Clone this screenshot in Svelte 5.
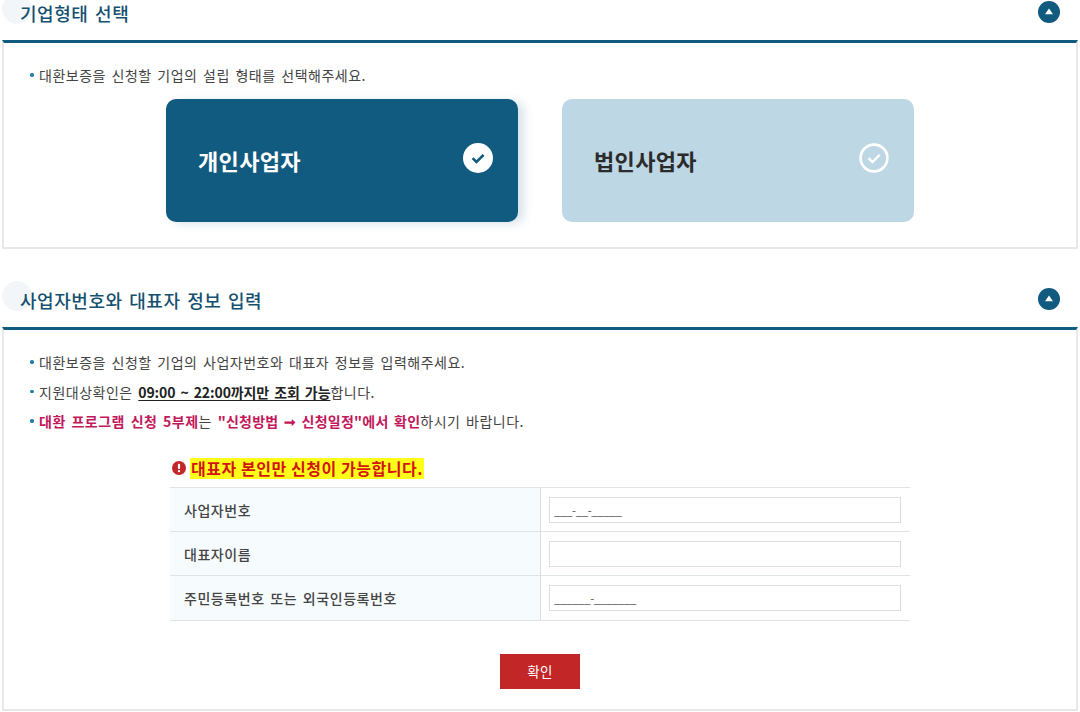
<script>
  let kind = $state('personal');
  const kinds = [
    { id: 'personal', label: '개인사업자' },
    { id: 'corporate', label: '법인사업자' }
  ];
  const rows = [
    { label: '사업자번호', value: '___-__-_____' },
    { label: '대표자이름', value: '' },
    { label: '주민등록번호 또는 외국인등록번호', value: '______-_______' }
  ];
</script>

<main class="page">
  <section class="section">
    <header class="head">
      <h2>기업형태 선택</h2>
      <button class="toggle" aria-label="접기">
        <svg width="22" height="22" viewBox="0 0 22 22"><circle cx="11" cy="11" r="11" fill="#115a80"/><path d="M11 7.4 15 13.2H7Z" fill="#fff"/></svg>
      </button>
    </header>
    <div class="panel first">
      <ul class="notes">
        <li>대환보증을 신청할 기업의 설립 형태를 선택해주세요.</li>
      </ul>
      <div class="cards">
        {#each kinds as k}
          <button class="card" class:on={kind === k.id} onclick={() => (kind = k.id)}>
            <span>{k.label}</span>
            <svg class="tick" width="30" height="30" viewBox="0 0 30 30">
              {#if kind === k.id}
                <circle cx="15" cy="15" r="15" fill="#fff"/>
                <path d="M9.6 15.2 13.4 19 20.6 11.8" fill="none" stroke="#115a80" stroke-width="2.6"/>
              {:else}
                <circle cx="15" cy="15" r="13.4" fill="none" stroke="#fff" stroke-width="2.6"/>
                <path d="M9.6 15.2 13.4 19 20.6 11.8" fill="none" stroke="#fff" stroke-width="2.4"/>
              {/if}
            </svg>
          </button>
        {/each}
      </div>
    </div>
  </section>

  <section class="section second">
    <header class="head">
      <h2>사업자번호와 대표자 정보 입력</h2>
      <button class="toggle" aria-label="접기">
        <svg width="22" height="22" viewBox="0 0 22 22"><circle cx="11" cy="11" r="11" fill="#115a80"/><path d="M11 7.4 15 13.2H7Z" fill="#fff"/></svg>
      </button>
    </header>
    <div class="panel">
      <ul class="notes">
        <li>대환보증을 신청할 기업의 사업자번호와 대표자 정보를 입력해주세요.</li>
        <li>지원대상확인은 <b class="under">09:00 ~ 22:00까지만 조회 가능</b>합니다.</li>
        <li><b class="pink">대환 프로그램 신청 5부제</b>는 <b class="pink tight">"신청방법 ➞ 신청일정"에서 확인</b>하시기 바랍니다.</li>
      </ul>

      <div class="form">
        <p class="warn">
          <svg width="14" height="14" viewBox="0 0 14 14"><circle cx="7" cy="7" r="7" fill="#c32626"/><rect x="5.9" y="2.8" width="2.2" height="5.2" rx="1" fill="#fff"/><circle cx="7" cy="10.1" r="1.2" fill="#fff"/></svg>
          <mark>대표자 본인만 신청이 가능합니다.</mark>
        </p>
        <div class="table">
          {#each rows as r}
            <div class="row">
              <label class="th" for={r.label}>{r.label}</label>
              <div class="td"><input id={r.label} type="text" value={r.value} /></div>
            </div>
          {/each}
        </div>
        <div class="actions"><button class="ok">확인</button></div>
      </div>
    </div>
  </section>
</main>

<style>
  :global(body) {
    margin: 0;
    background: #fff;
    overflow: hidden;
  }
  .page {
    width: 1080px;
    height: 712px;
    overflow: hidden;
    box-sizing: border-box;
    padding: 0 2px;
    font-family: "Noto Sans CJK KR", "Noto Sans", sans-serif;
    color: #333;
  }
  .section:first-child {
    margin-top: -6px;
  }
  .second {
    margin-top: 32px;
  }
  .head {
    height: 46px;
    box-sizing: border-box;
    display: flex;
    align-items: flex-start;
    justify-content: space-between;
    padding: 5px 18px 0 18px;
    background: radial-gradient(circle 15px at 15px 15px, #f3f6f9 98%, transparent 100%);
  }
  h2 {
    margin: 0;
    font-size: 18px;
    font-weight: 500;
    letter-spacing: 0.55px;
    word-spacing: 2px;
    line-height: 28px;
    color: #14506f;
  }
  .toggle {
    display: flex;
    border: 0;
    padding: 0;
    margin-top: 2px;
    background: none;
    cursor: pointer;
  }
  .panel {
    border: 2px solid #e8e8e8;
    border-top: 3px solid #115a80;
    height: 379px;
    box-sizing: content-box;
  }
  .panel.first {
    height: 204px;
  }
  .notes {
    list-style: none;
    margin: 0;
    padding: 18px 0 0 26px;
    font-size: 14px;
    line-height: 29.5px;
    letter-spacing: 0.5px;
    word-spacing: 2px;
    color: #444;
  }
  .notes li {
    position: relative;
    padding-left: 9px;
  }
  .notes li::before {
    content: "";
    position: absolute;
    left: 0;
    top: 12px;
    width: 3.5px;
    height: 3.5px;
    border-radius: 50%;
    background: #1a7ea8;
  }
  .notes b {
    font-weight: 700;
  }
  .under {
    color: #222;
    letter-spacing: -0.1px;
    text-decoration: underline;
    text-underline-offset: 2px;
  }
  .pink {
    color: #c2185b;
  }
  .tight {
    letter-spacing: 0.25px;
  }
  .cards {
    display: flex;
    justify-content: center;
    gap: 44px;
    margin-top: 8px;
  }
  .card {
    width: 352px;
    height: 123px;
    border: 0;
    border-radius: 10px;
    background: #bdd7e5;
    color: #2b2b2b;
    display: flex;
    align-items: center;
    justify-content: space-between;
    padding: 0 25px 0 32px;
    font: inherit;
    font-size: 22px;
    font-weight: 700;
    letter-spacing: 0.35px;
    cursor: pointer;
    text-align: left;
  }
  .card.on {
    background: #115a80;
    color: #fff;
    box-shadow: 6px 2px 10px rgba(17, 90, 128, 0.16);
  }
  .tick {
    flex: none;
    margin-top: -5px;
  }
  .form {
    width: 740px;
    margin: 21px 0 0 166px;
  }
  .warn {
    margin: 0;
    height: 38px;
    display: flex;
    align-items: flex-start;
    gap: 4px;
    padding: 0 0 0 2px;
    box-sizing: border-box;
  }
  .warn svg {
    margin-top: 3px;
  }
  mark {
    background: #ffff19;
    color: #d11414;
    font-size: 16px;
    font-weight: 700;
    line-height: 21px;
    letter-spacing: 0.55px;
    height: 21px;
    padding: 0 1px;
    white-space: nowrap;
  }
  .table {
    border-top: 1px solid #e0e4e6;
    margin-top: -9px;
  }
  .row {
    display: grid;
    grid-template-columns: 371px 369px;
    height: 44px;
    box-sizing: border-box;
    border-bottom: 1px solid #dfe4e7;
  }
  .row:last-child {
    height: 45px;
  }
  .th {
    display: flex;
    align-items: center;
    padding: 1px 0 0 14px;
    background: #f6fbfe;
    font-size: 14px;
    letter-spacing: 0.55px;
    word-spacing: 2px;
    font-weight: 500;
    color: #444;
    border-right: 1px solid #d9dee1;
  }
  .td {
    display: flex;
    align-items: center;
    padding: 1px 0 0 8px;
  }
  input {
    width: 352px;
    height: 26px;
    box-sizing: border-box;
    border: 1px solid #dedede;
    background: #fff;
    padding: 0 4px;
    font: 11.5px "Noto Sans CJK KR", "Noto Sans", sans-serif;
    letter-spacing: -0.4px;
    color: #555;
    outline: none;
  }
  .actions {
    display: flex;
    justify-content: center;
    margin-top: 33px;
  }
  .ok {
    width: 80px;
    height: 35px;
    border: 0;
    background: #c32626;
    color: #fff;
    font: 13.5px "Noto Sans CJK KR", "Noto Sans", sans-serif;
    letter-spacing: 0.3px;
    cursor: pointer;
  }
</style>
